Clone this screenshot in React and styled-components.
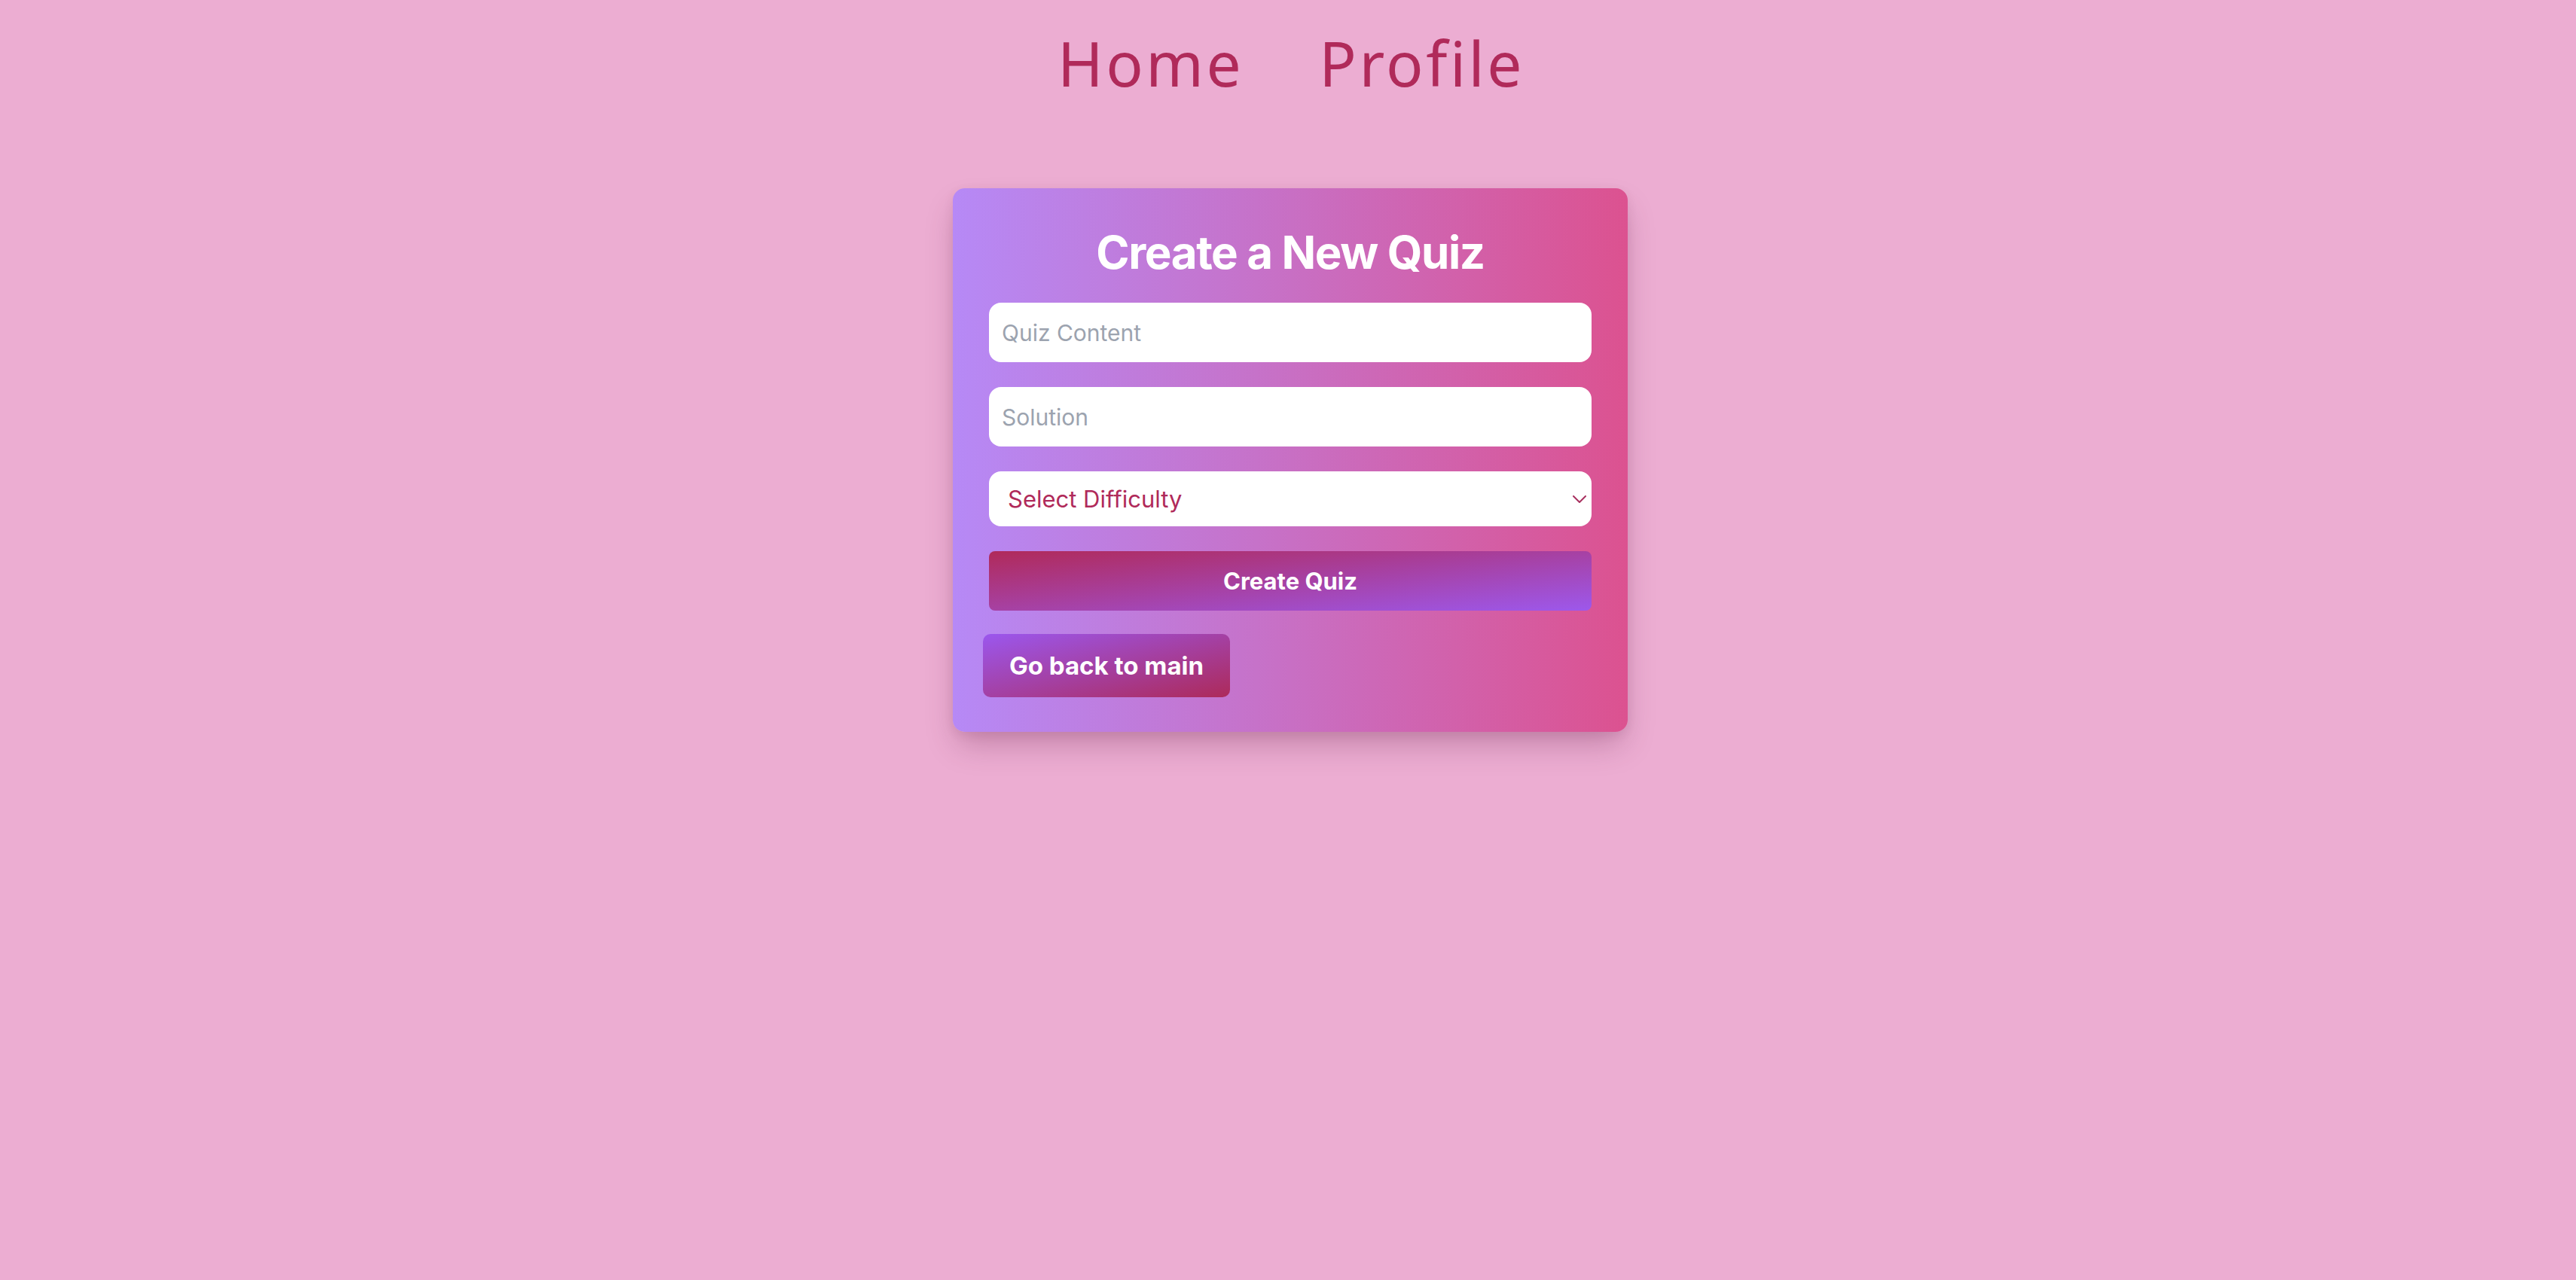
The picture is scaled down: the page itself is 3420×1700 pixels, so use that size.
import React from "react";
import styled, { createGlobalStyle } from "styled-components";

const GlobalStyle = createGlobalStyle`
  html, body {
    margin: 0;
    padding: 0;
    background: #ecadd2;
  }
  body {
    min-height: 100vh;
    font-family: Inter, "Liberation Sans", sans-serif;
  }
  * { box-sizing: border-box; }
`;

const Page = styled.div`
  min-height: 100vh;
  background: #ecadd2;
  display: flex;
  flex-direction: column;
  align-items: center;
`;

const Nav = styled.nav`
  display: flex;
  justify-content: center;
  gap: 100px;
  padding-top: 42px;
  padding-left: 8px;
`;

const NavLink = styled.a`
  font-family: "Noto Sans", "Open Sans", sans-serif;
  font-size: 82px;
  line-height: 82px;
  font-weight: 400;
  letter-spacing: 3.5px;
  color: #b02a5a;
  text-decoration: none;
  cursor: pointer;
`;

const Card = styled.section`
  margin-top: 126px;
  margin-left: 6px;
  width: 896px;
  padding: 48px 48px 46px;
  border-radius: 16px;
  background: linear-gradient(to right, #b689f6, #c672c9 45%, #dc5290);
  box-shadow: 0 22px 40px -6px rgba(90, 20, 60, 0.28), 0 4px 14px rgba(90, 20, 60, 0.08);
  display: flex;
  flex-direction: column;
`;

const Title = styled.h1`
  margin: 0 0 30px;
  font-family: Inter, "Liberation Sans", sans-serif;
  font-weight: 700;
  font-size: 60px;
  line-height: 74px;
  letter-spacing: -1.4px;
  color: #ffffff;
  text-align: center;
`;

const Form = styled.form`
  display: flex;
  flex-direction: column;
  gap: 33px;
`;

const TextInput = styled.input`
  height: 79px;
  width: 100%;
  border: none;
  outline: none;
  border-radius: 16px;
  background: #ffffff;
  padding: 0 17px;
  font-family: Inter, "Liberation Sans", sans-serif;
  font-size: 30px;
  color: #374151;
  &::placeholder {
    color: #9ca3af;
  }
`;

const SelectWrap = styled.div`
  position: relative;
  height: 73px;
`;

const Select = styled.select`
  appearance: none;
  -webkit-appearance: none;
  width: 100%;
  height: 100%;
  border: none;
  outline: none;
  border-radius: 16px;
  background: #ffffff;
  padding: 0 50px 0 25px;
  font-family: Inter, "Liberation Sans", sans-serif;
  font-size: 31px;
  color: #b02a5a;
`;

const Chevron = styled.svg`
  position: absolute;
  right: 7px;
  top: 50%;
  width: 18px;
  height: 10px;
  margin-top: -5px;
  pointer-events: none;
`;

const GradientButton = styled.button`
  border: none;
  cursor: pointer;
  color: #ffffff;
  font-family: Inter, "Liberation Sans", sans-serif;
  font-weight: 700;
  border-radius: ${(p) => p.$radius}px;
  background: ${(p) =>
    p.$reverse
      ? "linear-gradient(to bottom right, #9b57ee, #ad2a5a)"
      : "linear-gradient(to bottom right, #b02a5a, #9d58ec)"};
`;

const SubmitButton = styled(GradientButton)`
  height: 79px;
  width: 100%;
  font-size: 31px;
`;

const BackButton = styled(GradientButton)`
  align-self: flex-start;
  margin: 31px 0 0 -8px;
  height: 84px;
  padding: 0 35px;
  font-size: 33px;
`;

export default function App() {
  return (
    <Page>
      <GlobalStyle />
      <Nav>
        <NavLink>Home</NavLink>
        <NavLink>Profile</NavLink>
      </Nav>
      <Card>
        <Title>Create a New Quiz</Title>
        <Form onSubmit={(e) => e.preventDefault()}>
          <TextInput placeholder="Quiz Content" />
          <TextInput placeholder="Solution" />
          <SelectWrap>
            <Select defaultValue="">
              <option value="">Select Difficulty</option>
              <option value="easy">Easy</option>
              <option value="medium">Medium</option>
              <option value="hard">Hard</option>
            </Select>
            <Chevron viewBox="0 0 18 10" fill="none">
              <path d="M1 1l8 8 8-8" stroke="#a8305f" strokeWidth="2" strokeLinecap="round" strokeLinejoin="round" />
            </Chevron>
          </SelectWrap>
          <SubmitButton type="submit" $radius={8}>Create Quiz</SubmitButton>
        </Form>
        <BackButton type="button" $reverse $radius={10}>Go back to main</BackButton>
      </Card>
    </Page>
  );
}
